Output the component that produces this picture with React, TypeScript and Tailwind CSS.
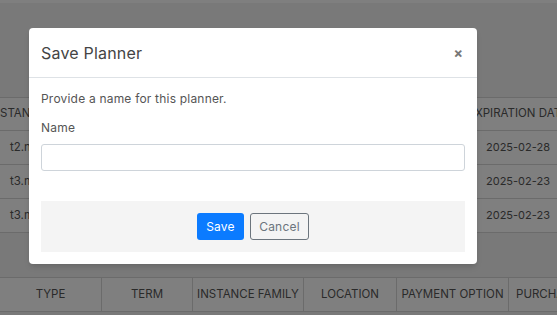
import React from "react";

const font = { fontFamily: "Inter, 'Open Sans', sans-serif" };

const rows = [
  { type: "t2.nano", exp: "2025-02-28" },
  { type: "t3.micro", exp: "2025-02-23" },
  { type: "t3.micro", exp: "2025-02-23" },
];

const columns = [
  { label: "TYPE", w: "w-[102px]" },
  { label: "TERM", w: "w-[91px]" },
  { label: "INSTANCE FAMILY", w: "w-[111px]" },
  { label: "LOCATION", w: "w-[93px]" },
  { label: "PAYMENT OPTION", w: "w-[112px]" },
  { label: "PURCHASE DATE", w: "w-[110px]" },
];

function Background() {
  return (
    <div className="flex flex-col h-full bg-[#f3f3f3] text-[11.5px] text-[#555]">
      <div className="h-[3px] bg-white" />
      <div className="h-[94px]" />
      <div className="flex flex-col">
        <div className="flex h-[34px] items-center border-y border-[#d6d6d6] bg-white">
          <div className="w-[451px] shrink-0 whitespace-nowrap overflow-hidden">STANCE TYPE</div>
          <div className="w-[134px] shrink-0 text-center whitespace-nowrap">EXPIRATION DATE</div>
        </div>
        {rows.map((r, i) => (
          <div key={i} className="flex h-[34px] items-center border-b border-[#d6d6d6] bg-white">
            <div className="w-[451px] shrink-0 pl-[10px] whitespace-nowrap">{r.type}</div>
            <div className="w-[134px] shrink-0 text-center text-[11px]">{r.exp}</div>
          </div>
        ))}
      </div>
      <div className="h-[44px]" />
      <div className="flex h-[35px] items-center border-y border-[#d6d6d6] bg-white">
        {columns.map((c, i) => (
          <div
            key={i}
            className={`${c.w} shrink-0 h-full flex items-center justify-center whitespace-nowrap border-r border-[#d6d6d6]`}
          >
            {c.label}
          </div>
        ))}
      </div>
    </div>
  );
}

export default function App() {
  return (
    <div className="relative w-[557px] h-[315px] overflow-hidden" style={font}>
      <Background />
      <div className="absolute inset-0 bg-black/50" />
      <div className="absolute left-[29px] top-[28px] w-[448px] rounded-[4px] bg-white shadow-md">
        <div className="flex h-[50px] items-center justify-between border-b border-[#dee2e6] px-3">
          <h5 className="text-[16px] text-[#444] tracking-[0.2px]">Save Planner</h5>
          <button className="text-[14px] font-bold text-[#777] leading-none pr-[2px]">×</button>
        </div>
        <div className="px-3 pt-[13px] pb-3 text-[12px] text-[#555] tracking-[0.2px]">
          <p className="leading-[16px]">Provide a name for this planner.</p>
          <label className="block mt-[13px] leading-[16px]">Name</label>
          <input className="mt-[8px] block w-full h-[27px] rounded-[3px] border border-[#ced4da] bg-white px-2 outline-none" />
          <div className="mt-[30px] flex h-[51px] items-center justify-center gap-[6px] bg-[#f4f4f4]">
            <button className="h-[27px] w-[47px] rounded-[3px] bg-[#0b7bff] text-[12px] text-white">Save</button>
            <button className="h-[27px] w-[59px] rounded-[3px] border border-[#6c757d] text-[12px] text-[#6c757d]">
              Cancel
            </button>
          </div>
        </div>
      </div>
    </div>
  );
}
